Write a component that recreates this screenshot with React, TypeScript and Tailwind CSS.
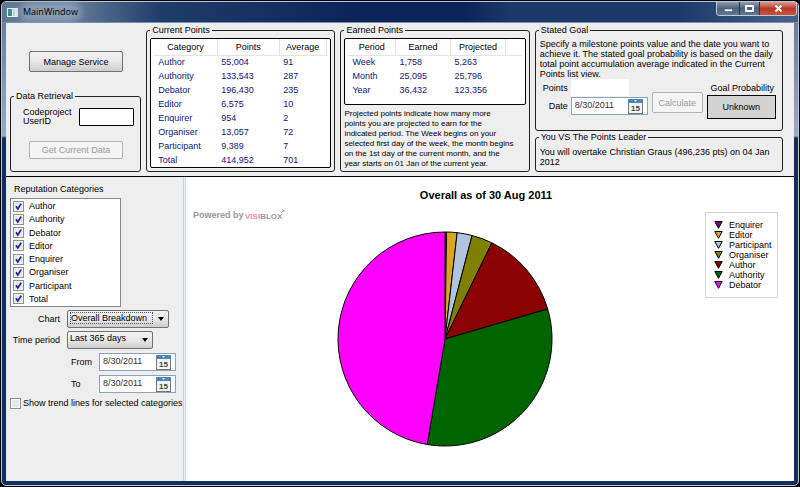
import type React from "react"
import { useState } from "react"

const POINTS = [
  ["Author", "55,004", "91"],
  ["Authority", "133,543", "287"],
  ["Debator", "196,430", "235"],
  ["Editor", "6,575", "10"],
  ["Enquirer", "954", "2"],
  ["Organiser", "13,057", "72"],
  ["Participant", "9,389", "7"],
  ["Total", "414,952", "701"],
]

const EARNED = [
  ["Week", "1,758", "5,263"],
  ["Month", "25,095", "25,796"],
  ["Year", "36,432", "123,356"],
]

const SLICES = [
  { name: "Enquirer", value: 954, color: "#800080" },
  { name: "Editor", value: 6575, color: "#daa520" },
  { name: "Participant", value: 9389, color: "#b0c4de" },
  { name: "Organiser", value: 13057, color: "#808000" },
  { name: "Author", value: 55004, color: "#8b0000" },
  { name: "Authority", value: 133543, color: "#006400" },
  { name: "Debator", value: 196430, color: "#ff00ff" },
]

interface GroupProps {
  title: string
  className?: string
  children: React.ReactNode
}

const Group: React.FC<GroupProps> = ({ title, className = "", children }) => (
  <fieldset className={`min-w-0 rounded-[3px] border border-[#222] ${className}`}>
    <legend className="ml-[3px] px-[2px] leading-3">{title}</legend>
    {children}
  </fieldset>
)

interface ListViewProps {
  columns: string[]
  widths: string[]
  rows: string[][]
  className?: string
}

const ListView: React.FC<ListViewProps> = ({ columns, widths, rows, className = "" }) => (
  <div className={`rounded-[2px] border border-black bg-white px-[3px] ${className}`}>
    <table className="w-full table-fixed border-collapse">
      <thead>
        <tr className="h-4 border-b border-[#e2e4e8]">
          {columns.map((column, i) => (
            <th key={column} className={`border-r border-[#dfe2e8] p-0 text-center font-normal ${widths[i]}`}>
              {column}
            </th>
          ))}
          <td className="p-0" />
        </tr>
      </thead>
      <tbody className="text-[#14147c]">
        {rows.map((row) => (
          <tr key={row[0]} className="h-[14px]">
            {row.map((cell) => (
              <td key={cell} className="py-0 pl-1">
                {cell}
              </td>
            ))}
          </tr>
        ))}
      </tbody>
    </table>
  </div>
)

interface CheckProps {
  label: string
  defaultChecked?: boolean
  className?: string
}

const Check: React.FC<CheckProps> = ({ label, defaultChecked, className = "gap-[5px]" }) => (
  <label className={`flex items-center whitespace-nowrap ${className}`}>
    <span className="grid">
      <input
        type="checkbox"
        defaultChecked={defaultChecked}
        className="peer col-start-1 row-start-1 size-[11px] appearance-none border border-[#8e8f8f] bg-[#e4e7ec] shadow-[inset_0_0_0_1px_#f6f6f6]"
      />
      <svg
        viewBox="0 0 11 11"
        className="pointer-events-none invisible col-start-1 row-start-1 size-[11px] peer-checked:visible"
      >
        <path d="M3 5.2 L4.8 8 L8.2 2.6" fill="none" stroke="#25258c" strokeWidth="1.7" />
      </svg>
    </span>
    {label}
  </label>
)

const DateBox: React.FC<{ id: string }> = ({ id }) => (
  <div className="flex h-[18px] w-[77px] items-center border border-[#8aa3bb] bg-white pr-1 pl-[3px]">
    <input id={id} defaultValue="8/30/2011" className="h-3 w-full min-w-0 pb-[2px] text-[#333] outline-none" />
    <button type="button" aria-label="Open calendar" className="shrink-0">
      <svg viewBox="0 0 15 15" className="size-[15px]">
        <rect x="0.5" y="0.5" width="14" height="14" fill="#f4f4f4" stroke="#70757b" />
        <path d="M0 0h15v4H0z" fill="#4a86b8" />
        <path d="M6 1h3L7.5 3z" fill="#fff" />
        <text
          x="7.5"
          y="12"
          textAnchor="middle"
          fontSize="8"
          fontWeight="bold"
          fontFamily="Liberation Sans, sans-serif"
          fill="#444"
        >
          15
        </text>
      </svg>
    </button>
  </div>
)

interface PickerProps {
  id: string
  options: string[]
  className: string
  focused?: boolean
}

const Picker: React.FC<PickerProps> = ({ id, options, className, focused }) => (
  <div
    className={`grid h-[18px] items-center rounded-[2px] border border-[#707070] bg-linear-to-b from-[#f3f3f3] via-[#e8e8e8] to-[#cdcdcd] ${className}`}
  >
    <select
      id={id}
      className={`col-start-1 row-start-1 mr-[15px] ml-[2px] h-3 appearance-none self-start outline-none ${
        focused ? "mt-px border border-dotted border-[#555] leading-[10px]" : "leading-3"
      }`}
    >
      {options.map((option) => (
        <option key={option}>{option}</option>
      ))}
    </select>
    <svg
      viewBox="0 0 6 4"
      className="pointer-events-none col-start-1 row-start-1 mr-[4px] h-1 w-[6px] justify-self-end"
    >
      <path d="M0 0h6L3 4z" fill="#000" />
    </svg>
  </div>
)

const PieChart: React.FC = () => {
  const total = SLICES.reduce((sum, slice) => sum + slice.value, 0)
  const point = (value: number) => {
    const angle = (value / total) * Math.PI * 2
    return `${108 + 107 * Math.sin(angle)} ${108 - 107 * Math.cos(angle)}`
  }
  let start = 0

  return (
    <svg viewBox="0 0 216 216" className="size-[216px]" role="img" aria-label="Overall breakdown">
      {SLICES.map((slice) => {
        const end = start + slice.value
        const large = slice.value / total > 0.5 ? 1 : 0
        const d = `M108 108 L${point(start)} A107 107 0 ${large} 1 ${point(end)} Z`
        start = end
        return <path key={slice.name} d={d} fill={slice.color} stroke="#000" strokeLinejoin="round" />
      })}
    </svg>
  )
}

const TitleBar: React.FC = () => (
  <header className="-mx-1 flex h-[21px] shrink-0 items-start justify-between rounded-t-[4px] border-b border-[#7a92b0] bg-[linear-gradient(90deg,#5f7894_0%,#6a809d_8%,#1f3d69_20%,#0a2556_45%,#0a2556_58%,#1b3a68_64%,#1b3a68_85%,#48628a_100%)] pr-px pl-[5px]">
    <div className="flex h-5 items-center">
      <svg viewBox="0 0 11 9" className="h-[9px] w-[11px]">
        <path d="M0 0h11v9H0z" fill="#e9eef0" />
        <path d="M1 1h4v7H1z" fill="#3f8f86" />
        <path d="M6 1h2v7H6z" fill="#c3d0dc" />
      </svg>
      <h1 className="ml-[5px] rounded-full bg-[#93a5bc]/70 font-['Open_Sans','Noto_Sans',sans-serif] text-[9px] leading-3 text-black shadow-[0_0_6px_4px_rgba(147,165,188,0.7)]">
        MainWindow
      </h1>
    </div>
    <div className="flex h-[14px] overflow-hidden rounded-b-[4px] border border-t-0 border-[#c2cad6]">
      <button
        type="button"
        aria-label="Minimize"
        className="flex w-[23px] items-center justify-center border-r border-[#25354d] bg-linear-to-b from-[#8e9cb0] via-[#4c5f7c] to-[#5f7696]"
      >
        <svg viewBox="0 0 9 7" className="h-[7px] w-[9px]">
          <path d="M0.5 4h8v2.5h-8z" fill="#fff" stroke="#444" strokeWidth="0.5" />
        </svg>
      </button>
      <button
        type="button"
        aria-label="Maximize"
        className="flex w-[20px] items-center justify-center border-r border-[#25354d] bg-linear-to-b from-[#8e9cb0] via-[#4c5f7c] to-[#5f7696]"
      >
        <svg viewBox="0 0 9 7" className="h-[7px] w-[9px]">
          <path d="M1 1h7v5H1z" fill="none" stroke="#fff" strokeWidth="1.8" />
        </svg>
      </button>
      <button
        type="button"
        aria-label="Close"
        className="flex w-[36px] items-center justify-center bg-linear-to-b from-[#d99a90] via-[#b8392a] to-[#c7553a]"
      >
        <svg viewBox="0 0 9 7" className="h-[7px] w-[9px]">
          <path d="M1.5 0.5L7.5 6.5M7.5 0.5L1.5 6.5" stroke="#fff" strokeWidth="2" />
        </svg>
      </button>
    </div>
  </header>
)

const SummaryPanel: React.FC = () => {
  const [userId, setUserId] = useState("")

  return (
    <section className="grid shrink-0 grid-cols-[131fr_189fr_189fr_248fr] gap-x-[5px] border-b border-black bg-[#eee] pt-px pr-[11px] pb-1 pl-1">
      <div className="flex flex-col">
        <button
          type="button"
          className="mt-[27px] ml-[19px] h-[21px] w-[94px] rounded-[2px] border border-[#707070] bg-linear-to-b from-[#f3f3f3] via-[#e8e8e8] to-[#cdcdcd]"
        >
          Manage Service
        </button>
        <Group title="Data Retrieval" className="mt-[18px] grow">
          <div className="mt-[6px] flex items-center justify-between pr-[6px] pl-3">
            <label htmlFor="user-id" className="leading-[9px]">
              Codeproject
              <br />
              UserID
            </label>
            <input
              id="user-id"
              value={userId}
              onChange={(e) => setUserId(e.target.value)}
              className="h-[18px] w-[55px] rounded-[1px] border border-black bg-white px-1 outline-none"
            />
          </div>
          <button
            type="button"
            disabled
            className="mt-[15px] ml-[18px] h-[18px] w-[94px] rounded-[2px] border border-[#adb2b5] bg-[#f4f4f4] text-[#9a9a9a]"
          >
            Get Current Data
          </button>
        </Group>
      </div>

      <Group title="Current Points">
        <ListView
          columns={["Category", "Points", "Average"]}
          widths={["w-[63px]", "w-[62px]", "w-[47px]"]}
          rows={POINTS}
          className="mx-[3px] mt-[2px] mb-[3px]"
        />
      </Group>

      <Group title="Earned Points">
        <ListView
          columns={["Period", "Earned", "Projected"]}
          widths={["w-[47px]", "w-[55px]", "w-[55px]"]}
          rows={EARNED}
          className="mx-[3px] mt-[2px] h-[67px]"
        />
        <p className="mx-[3px] mt-1 text-[8px] leading-[10px]">
          Projected points indicate how many more
          <br />
          points you are projected to earn for the
          <br />
          indicated period. The Week begins on your
          <br />
          selected first day of the week, the month begins
          <br />
          on the 1st day of the current month, and the
          <br />
          year starts on 01 Jan of the current year.
        </p>
      </Group>

      <div className="flex min-w-0 flex-col">
        <Group title="Stated Goal" className="h-[107px]">
          <p className="mx-1 mt-[3px] leading-[10px]">
            Specify a milestone points value and the date you want to achieve it. The stated goal probability is based
            on the daily total point accumulation average indicated in the Current Points list view.
          </p>
          <div className="mx-1 flex">
            <div className="grid grid-cols-[28px_77px] items-center gap-x-[3px] gap-y-px self-start">
              <label htmlFor="goal-points" className="text-right">
                Points
              </label>
              <input id="goal-points" className="h-[17px] w-[58px] bg-white px-1 outline-none" />
              <label htmlFor="goal-date" className="text-right">
                Date
              </label>
              <DateBox id="goal-date" />
            </div>
            <button
              type="button"
              disabled
              className="mt-[13px] ml-1 h-[21px] w-[51px] rounded-[2px] border border-[#adb2b5] bg-[#f4f4f4] text-[#9a9a9a]"
            >
              Calculate
            </button>
            <div className="ml-1 flex grow flex-col text-center">
              <span className="pt-[2px] leading-[14px]">Goal Probability</span>
              <output className="mr-[2px] h-6 border border-black bg-[#d3d3d3] leading-[22px]">Unknown</output>
            </div>
          </div>
        </Group>
        <Group title="You VS The Points Leader" className="grow">
          <p className="mx-1 mt-1 leading-[10px]">You will overtake Christian Graus (496,236 pts) on 04 Jan 2012</p>
        </Group>
      </div>
    </section>
  )
}

const OptionsPanel: React.FC = () => (
  <aside className="w-[177px] shrink-0 bg-[#eee] pt-[6px] pl-1">
    <h2 className="pl-1 leading-3">Reputation Categories</h2>
    <div className="mt-[3px] flex h-[109px] w-[111px] flex-col justify-between border border-[#828790] bg-white py-px pl-[2px]">
      {POINTS.map(([name]) => (
        <Check key={name} label={name} defaultChecked />
      ))}
    </div>
    <div className="mt-[3px] grid grid-cols-[50px_1fr] items-center gap-x-[7px] gap-y-[3px]">
      <label htmlFor="chart" className="text-right">
        Chart
      </label>
      <Picker id="chart" options={["Overall Breakdown", "Daily Trend"]} className="w-[102px]" focused />
      <label htmlFor="period" className="text-right">
        Time period
      </label>
      <Picker id="period" options={["Last 365 days", "Last 30 days"]} className="w-[86px]" />
    </div>
    <div className="mt-1 grid grid-cols-[24px_77px] items-center gap-x-1 gap-y-1 pl-[61px]">
      <label htmlFor="from">From</label>
      <DateBox id="from" />
      <label htmlFor="to">To</label>
      <DateBox id="to" />
    </div>
    <div className="mt-1">
      <Check label="Show trend lines for selected categories" className="gap-[2px]" />
    </div>
  </aside>
)

const ChartPanel: React.FC = () => (
  <main className="grow bg-white pt-3 pr-[9px] pl-[7px]">
    <h2 className="pr-[6px] text-center text-[11px] leading-3 font-bold">Overall as of 30 Aug 2011</h2>
    <div className="flex items-start pr-[7px]">
      <p className="flex w-[87px] items-center pt-2 font-bold text-[#999]">
        <span className="whitespace-nowrap">Powered by</span>
        <svg viewBox="0 0 40 12" className="ml-px h-3 w-10 shrink-0" role="img" aria-label="Visiblox">
          <text
            x="0"
            y="10"
            fontFamily="Liberation Sans Narrow, Liberation Sans, sans-serif"
            fontSize="8"
            fontWeight="bold"
            fill="#999"
          >
            <tspan fill="#f08a9c">VISI</tspan>BLOX
          </text>
          <path d="M36 4L39 1M37 1h2v2" stroke="#f08a9c" fill="none" />
        </svg>
      </p>
      <div className="flex grow justify-center pt-[30px] pr-[95px]">
        <PieChart />
      </div>
      <ul className="mt-[11px] flex h-[86px] w-[73px] flex-col justify-center border border-[#d3d3d3] pl-2">
        {SLICES.map((slice) => (
          <li key={slice.name} className="flex h-[10px] items-center leading-[10px]">
            <svg viewBox="0 0 9 8" className="mr-[6px] h-2 w-[9px]">
              <path d="M0.8 0.5h7.4L4.5 7.3z" fill={slice.color} stroke="#000" />
            </svg>
            {slice.name}
          </li>
        ))}
      </ul>
    </div>
  </main>
)

export default function App() {
  return (
    <div className="flex min-h-screen flex-col bg-black p-px font-['Liberation_Sans',Arial,sans-serif] text-[9px] leading-3 text-black">
      <div className="flex grow flex-col rounded-[5px] border border-[#b9c6d8] bg-[linear-gradient(180deg,#5f7894_0px,#9aabc3_134px,#12305f_136px)] px-1 pb-1">
        <TitleBar />
        <div className="flex grow flex-col">
          <SummaryPanel />
          <div className="flex grow">
            <OptionsPanel />
            <div className="w-[3px] shrink-0 cursor-col-resize border-x border-[#c9d3dc] bg-[#eef3f7]" />
            <ChartPanel />
          </div>
        </div>
      </div>
    </div>
  )
}
